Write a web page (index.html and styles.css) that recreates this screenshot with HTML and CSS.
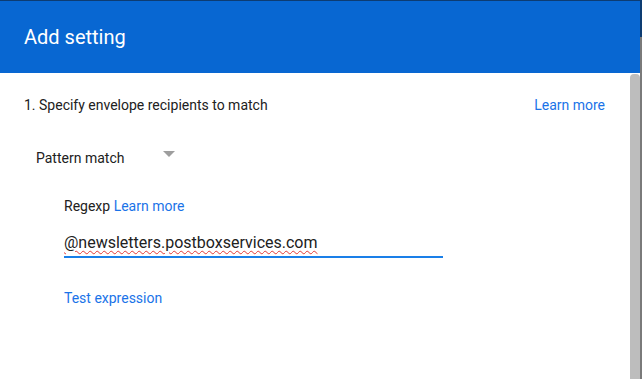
FILE: index.html
```html
<!DOCTYPE html>
<html lang="en">
<head>
    <meta charset="UTF-8">
    <title>Add setting</title>
    <link rel="stylesheet" href="styles.css">
</head>
<body>
    <div class="page">
        <div class="dialog">
            <div class="dialog-header">
                <h1>Add setting</h1>
            </div>
            <div class="dialog-body">
                <div class="content">
                    <div class="step-row">
                        <span class="step-title">1. Specify envelope recipients to match</span>
                        <a class="link" href="#">Learn more</a>
                    </div>

                    <div class="select">
                        <span>Pattern match</span>
                        <span class="caret"></span>
                    </div>

                    <div class="regexp">
                        <div class="regexp-label">Regexp <a class="link" href="#">Learn more</a></div>
                        <div class="field">
                            <span class="field-value">@newsletters.postboxservices.com</span>
                        </div>
                        <a class="link test-link" href="#">Test expression</a>
                    </div>
                </div>
                <div class="scrollbar"><div class="thumb"></div></div>
            </div>
        </div>
        <div class="backdrop-edge"></div>
    </div>
</body>
</html>
```

FILE: styles.css
```css
html, body {
    margin: 0;
    padding: 0;
    height: 100%;
}

body {
    font-family: 'Roboto', 'Liberation Sans', sans-serif;
    color: #212121;
    background-color: #ffffff;
    overflow: hidden;
}

.page {
    display: flex;
    height: 379px;
    border-top: 1px solid #0d3c72;
}

.dialog {
    width: 640px;
    display: flex;
    flex-direction: column;
    background-color: #ffffff;
}

.backdrop-edge {
    width: 2px;
    background: linear-gradient(#0d3c72 0, #0d3c72 36px, #7a7a7a 36px);
}

.dialog-header {
    height: 72px;
    background-color: #0867d2;
    padding: 0 24px;
    box-sizing: border-box;
}

.dialog-header h1 {
    margin: 0;
    padding-top: 24px;
    font-size: 20px;
    font-weight: 400;
    color: #ffffff;
    line-height: 24px;
}

.dialog-body {
    flex: 1;
    display: flex;
}

.content {
    flex: 1;
    padding: 23px 25px 0 24px;
}

.step-row {
    display: flex;
    justify-content: space-between;
    font-size: 14px;
    line-height: 18px;
}

.link {
    color: #1a73e8;
    text-decoration: none;
}

.select {
    display: flex;
    align-items: center;
    margin: 35px 0 0 12px;
    font-size: 14px;
    line-height: 18px;
}

.caret {
    width: 0;
    height: 0;
    margin: -8px 0 0 39px;
    border-left: 6px solid transparent;
    border-right: 6px solid transparent;
    border-top: 6px solid #9e9e9e;
}

.regexp {
    padding-left: 40px;
    margin-top: 30px;
}

.regexp-label {
    font-size: 14px;
    line-height: 18px;
}

.field {
    width: 379px;
    margin-top: 18px;
    border-bottom: 2px solid #1a7fe8;
    padding-bottom: 3px;
}

.field-value {
    font-size: 16px;
    line-height: 20px;
    text-decoration: underline wavy #e53935;
    text-decoration-thickness: 1px;
    text-underline-offset: 2px;
}

.test-link {
    display: block;
    margin-top: 31px;
    font-size: 14px;
    line-height: 18px;
}

.scrollbar {
    width: 10px;
    padding-top: 1px;
    background-color: #ffffff;
}

.thumb {
    height: 100%;
    background-color: #bdbdbd;
    border-radius: 4px 4px 0 0;
}
```
